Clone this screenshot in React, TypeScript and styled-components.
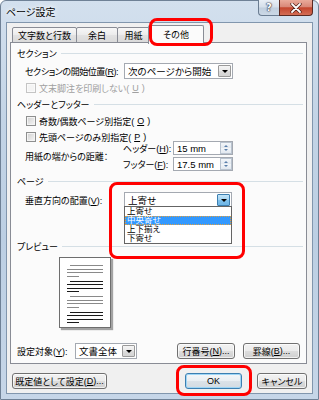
import React from 'react';
import styled, { createGlobalStyle } from 'styled-components';

const GlobalStyle = createGlobalStyle`
  * { box-sizing: border-box; }
  html, body { margin: 0; padding: 0; background: #fff; }
  body {
    font-family: 'Liberation Sans', 'Noto Sans CJK JP', sans-serif;
    font-size: 9px;
    color: #000;
    font-feature-settings: 'palt';
  }
`;

const Stage = styled.div`
  position: relative;
  width: 319px;
  height: 400px;
  overflow: hidden;
`;

const Window = styled.div`
  width: 319px;
  height: 400px;
  display: flex;
  flex-direction: column;
  padding: 0 5px 5px 5px;
  border: 1px solid #6f8196;
  border-radius: 6px 6px 0 0;
  background: linear-gradient(180deg, #d3e0ee 0%, #c3d4e6 30%, #bccfe3 60%, #c6d6e8 100%);
`;

const TitleBar = styled.div`
  height: 21px;
  display: flex;
  justify-content: space-between;
  align-items: flex-start;
`;

const Title = styled.div`
  font-size: 10px;
  padding: 3px 0 0 0;
  color: #000;
  text-shadow: 0 0 4px #fff, 0 0 6px #fff;
`;

const Caption = styled.div`
  display: flex;
  margin-top: -1px;
`;

const HelpButton = styled.div`
  width: 21px;
  height: 16px;
  border: 1px solid #6b7d92;
  border-top: none;
  border-right: none;
  border-radius: 0 0 0 4px;
  background: linear-gradient(180deg, #e9eff6 0%, #d5dfea 48%, #c1cfde 52%, #cbd8e6 100%);
  display: flex;
  align-items: center;
  justify-content: center;
  font-family: 'DejaVu Sans', sans-serif;
  font-weight: bold;
  font-size: 10px;
  color: #fff;
  text-shadow: 0 0 1px #334, 0 0 1px #334, 0 0 2px #445;
`;

const CloseButton = styled.div`
  width: 34px;
  height: 16px;
  border: 1px solid #5b2a22;
  border-top: none;
  border-radius: 0 0 4px 0;
  background: linear-gradient(180deg, #eaab9b 0%, #d98878 45%, #c4462e 52%, #d36d55 100%);
  display: flex;
  align-items: center;
  justify-content: center;
`;

const Client = styled.div`
  flex: 1;
  display: flex;
  flex-direction: column;
  border: 1px solid #8196ad;
  background: #f0f0f0;
`;

const TabRow = styled.div`
  height: 20px;
  display: flex;
  align-items: flex-end;
  padding-left: 5px;
  position: relative;
  z-index: 1;
`;

const Tab = styled.div<{ $w: number; $active?: boolean }>`
  width: ${(p) => p.$w}px;
  height: ${(p) => (p.$active ? 19 : 16)}px;
  margin: ${(p) => (p.$active ? '0 -2px -1px -2px' : '0 0 0 -1px')};
  border: 1px solid #898c95;
  border-bottom: ${(p) => (p.$active ? 'none' : '1px solid #898c95')};
  border-radius: 2px 2px 0 0;
  background: ${(p) =>
    p.$active ? '#fbfbfb' : 'linear-gradient(180deg, #f7f7f7 0%, #ececec 50%, #e2e2e2 51%, #dadada 100%)'};
  display: flex;
  align-items: center;
  justify-content: center;
  position: relative;
  z-index: ${(p) => (p.$active ? 2 : 1)};
  padding-bottom: ${(p) => (p.$active ? 2 : 0)}px;
  &:first-child { margin-left: 0; }
`;

const Panel = styled.div`
  width: 297px;
  height: 322px;
  margin: -1px 0 0 3px;
  border: 1px solid #898c95;
  background: #fbfbfb;
  display: flex;
  flex-direction: column;
  padding-left: 6px;
`;

const GroupHeader = styled.div<{ $mt: number }>`
  height: 14px;
  margin-top: ${(p) => p.$mt}px;
  display: flex;
  align-items: center;
  gap: 4px;
  padding-right: 3px;
  &::after {
    content: '';
    flex: 1;
    height: 1px;
    background: #d5dfe5;
  }
`;

const Row = styled.div<{ $mt: number; $h?: number; $pl?: number }>`
  display: flex;
  align-items: center;
  margin-top: ${(p) => p.$mt}px;
  height: ${(p) => p.$h ?? 16}px;
  padding-left: ${(p) => p.$pl ?? 0}px;
`;

const Label = styled.div<{ $w: number; $tight?: boolean }>`
  width: ${(p) => p.$w}px;
  white-space: nowrap;
  letter-spacing: ${(p) => (p.$tight ? '-0.45px' : 'normal')};
`;

const Combo = styled.div<{ $w: number }>`
  position: relative;
  width: ${(p) => p.$w}px;
  height: 16px;
  border: 1px solid #a4a9b1;
  background: #fff;
  display: flex;
  align-items: center;
  padding-left: 3px;
`;

const ComboText = styled.span`
  flex: 1;
  white-space: nowrap;
  font-size: 9.5px;
`;

const DropButton = styled.div<{ $hot?: boolean }>`
  width: 13px;
  height: 12px;
  margin-right: 1px;
  border: 1px solid ${(p) => (p.$hot ? '#3c7fb1' : '#9a9a9a')};
  border-radius: 1px;
  background: ${(p) =>
    p.$hot
      ? 'linear-gradient(180deg, #c2e4f8 0%, #a3d4f3 50%, #7dc0ec 51%, #6fb6e6 100%)'
      : 'linear-gradient(180deg, #f5f5f5 0%, #e8e8e8 50%, #dcdcdc 51%, #d4d4d4 100%)'};
  display: flex;
  align-items: center;
  justify-content: center;
  &::after {
    content: '';
    border-left: 3px solid transparent;
    border-right: 3px solid transparent;
    border-top: 3px solid #000;
  }
`;

const DropList = styled.div`
  position: absolute;
  top: calc(100% - 1px);
  left: -1px;
  right: -1px;
  border: 1px solid #646464;
  background: #fff;
  padding: 0;
  z-index: 5;
`;

const DropItem = styled.div<{ $sel?: boolean }>`
  height: 9px;
  line-height: 9px;
  font-size: 8.5px;
  padding-left: 2px;
  overflow: hidden;
  background: ${(p) => (p.$sel ? '#3399ff' : 'transparent')};
  color: ${(p) => (p.$sel ? '#fff' : '#000')};
  outline: ${(p) => (p.$sel ? '1px dotted #e0a040' : 'none')};
  outline-offset: -1px;
  white-space: nowrap;
`;

const CheckRow = styled.div<{ $mt: number; $disabled?: boolean }>`
  display: flex;
  align-items: center;
  gap: 3px;
  height: 14px;
  margin-top: ${(p) => p.$mt}px;
  padding-left: 9px;
  color: ${(p) => (p.$disabled ? '#a0a0a0' : '#000')};
`;

const Box = styled.span<{ $disabled?: boolean }>`
  width: 10px;
  height: 10px;
  border: 1px solid ${(p) => (p.$disabled ? '#c4c4c4' : '#8e8f8f')};
  background: ${(p) =>
    p.$disabled ? '#f4f4f4' : 'linear-gradient(135deg, #cfcfcf 0%, #e7e7e7 60%, #f7f7f7 100%)'};
  box-shadow: inset 0 0 0 1px ${(p) => (p.$disabled ? '#fafafa' : '#f4f4f4')};
`;

const DistanceBlock = styled.div`
  display: flex;
  align-items: center;
  margin-top: -3px;
  height: 30px;
  padding-left: 8px;
`;

const SpinColumn = styled.div`
  display: flex;
  flex-direction: column;
  gap: 2px;
`;

const SpinRow = styled.div`
  display: flex;
  align-items: center;
  height: 14px;
`;

const SpinBox = styled.div`
  width: 60px;
  height: 14px;
  border: 1px solid #a4a9b1;
  background: #fff;
  display: flex;
  align-items: center;
  padding-left: 3px;
`;

const SpinText = styled.span`
  flex: 1;
  font-size: 9.5px;
`;

const SpinButtons = styled.div`
  width: 12px;
  height: 12px;
  border: 1px solid #b9c3cf;
  background: linear-gradient(180deg, #f3f6f9 0%, #e2e8ef 50%, #f3f6f9 51%, #e2e8ef 100%);
  display: flex;
  flex-direction: column;
  align-items: center;
  justify-content: space-around;
  padding: 1px 0;
`;

const Arrow = styled.span<{ $up?: boolean }>`
  border-left: 2px solid transparent;
  border-right: 2px solid transparent;
  ${(p) => (p.$up ? 'border-bottom: 2px solid #5a7faa;' : 'border-top: 2px solid #5a7faa;')}
`;

const Page = styled.div`
  width: 52px;
  height: 71px;
  margin: 4px 0 0 42px;
  border: 1px solid #6e6e6e;
  background: #fff;
  box-shadow: 2px 2px 1px rgba(0, 0, 0, 0.35);
  padding: 7px 7px 0 7px;
  display: flex;
  flex-direction: column;
  gap: 4px;
`;

const Para = styled.div`
  display: flex;
  flex-direction: column;
  gap: 2.5px;
`;

const TextLine = styled.div<{ $kind: 'first' | 'full' | 'short'; $grey?: boolean }>`
  height: 1px;
  background: ${(p) => (p.$grey ? '#8a8a8a' : '#1a1a1a')};
  margin-left: ${(p) => (p.$kind === 'first' ? 3 : 0)}px;
  width: ${(p) => (p.$kind === 'short' ? '12px' : 'auto')};
`;

const BottomRow = styled.div`
  margin-top: auto;
  margin-bottom: 4px;
  height: 16px;
  display: flex;
  align-items: center;
`;

const Button = styled.div<{ $w: number; $default?: boolean; $ml?: number }>`
  width: ${(p) => p.$w}px;
  height: 16px;
  margin-left: ${(p) => p.$ml ?? 0}px;
  border: 1px solid ${(p) => (p.$default ? '#3c7fb1' : '#707070')};
  border-radius: 3px;
  background: ${(p) =>
    p.$default
      ? 'linear-gradient(180deg, #f4f7f9 0%, #e9eef2 50%, #dbe2e8 51%, #d3dbe2 100%)'
      : 'linear-gradient(180deg, #f2f2f2 0%, #ebebeb 50%, #dddddd 51%, #cfcfcf 100%)'};
  box-shadow: inset 0 0 0 1px ${(p) => (p.$default ? '#9fd6f6' : 'rgba(255,255,255,0.7)')};
  display: flex;
  align-items: center;
  justify-content: center;
  white-space: nowrap;
  font-size: 9px;
`;

const DialogButtons = styled.div`
  height: 16px;
  margin-top: 9px;
  display: flex;
  align-items: center;
  padding: 0 5px;
`;

const Spacer = styled.div`
  flex: 1;
`;

const Mark = styled.div<{ $x: number; $y: number; $w: number; $h: number }>`
  position: absolute;
  left: ${(p) => p.$x}px;
  top: ${(p) => p.$y}px;
  width: ${(p) => p.$w}px;
  height: ${(p) => p.$h}px;
  border: 3px solid #ff0000;
  border-radius: 8px;
  pointer-events: none;
  z-index: 10;
`;

const U = styled.span`
  text-decoration: underline;
`;

const paragraphs = [true, false, true, false];

export default function App() {
  return (
    <Stage>
      <GlobalStyle />
      <Window>
        <TitleBar>
          <Title>ページ設定</Title>
          <Caption>
            <HelpButton>?</HelpButton>
            <CloseButton>
              <svg width="12" height="10" viewBox="0 0 12 10">
                <path d="M2 1 L10 9 M10 1 L2 9" stroke="#4a1a12" strokeWidth="3.2" strokeLinecap="round" />
                <path d="M2 1 L10 9 M10 1 L2 9" stroke="#ffffff" strokeWidth="1.8" strokeLinecap="round" />
              </svg>
            </CloseButton>
          </Caption>
        </TitleBar>
        <Client>
          <TabRow>
            <Tab $w={65}>文字数と行数</Tab>
            <Tab $w={42}>余白</Tab>
            <Tab $w={33}>用紙</Tab>
            <Tab $w={56} $active>その他</Tab>
          </TabRow>
          <Panel>
            <GroupHeader $mt={3}>セクション</GroupHeader>
            <Row $mt={3} $pl={8}>
              <Label $w={99} $tight>
                セクションの開始位置(<U>R</U>):
              </Label>
              <Combo $w={109}>
                <ComboText>次のページから開始</ComboText>
                <DropButton />
              </Combo>
            </Row>
            <CheckRow $mt={2} $disabled>
              <Box $disabled />
              文末脚注を印刷しない(<U>U</U>)
            </CheckRow>
            <GroupHeader $mt={2}>ヘッダーとフッター</GroupHeader>
            <CheckRow $mt={3}>
              <Box />
              奇数/偶数ページ別指定(<U>O</U>)
            </CheckRow>
            <CheckRow $mt={2}>
              <Box />
              先頭ページのみ別指定(<U>P</U>)
            </CheckRow>
            <DistanceBlock>
              <Label $w={98}>用紙の端からの距離：</Label>
              <SpinColumn>
                <SpinRow>
                  <Label $w={50}>
                    ヘッダー(<U>H</U>):
                  </Label>
                  <SpinBox>
                    <SpinText>15 mm</SpinText>
                    <SpinButtons>
                      <Arrow $up />
                      <Arrow />
                    </SpinButtons>
                  </SpinBox>
                </SpinRow>
                <SpinRow>
                  <Label $w={50}>
                    フッター(<U>F</U>):
                  </Label>
                  <SpinBox>
                    <SpinText>17.5 mm</SpinText>
                    <SpinButtons>
                      <Arrow $up />
                      <Arrow />
                    </SpinButtons>
                  </SpinBox>
                </SpinRow>
              </SpinColumn>
            </DistanceBlock>
            <GroupHeader $mt={3}>ページ</GroupHeader>
            <Row $mt={4} $pl={8}>
              <Label $w={99}>
                垂直方向の配置(<U>V</U>):
              </Label>
              <Combo $w={108}>
                <ComboText>上寄せ</ComboText>
                <DropButton $hot />
                <DropList>
                  <DropItem>上寄せ</DropItem>
                  <DropItem $sel>中央寄せ</DropItem>
                  <DropItem>上下揃え</DropItem>
                  <DropItem>下寄せ</DropItem>
                </DropList>
              </Combo>
            </Row>
            <GroupHeader $mt={31}>プレビュー</GroupHeader>
            <Page>
              {paragraphs.map((grey, i) => (
                <Para key={i}>
                  <TextLine $kind="first" $grey={grey} />
                  <TextLine $kind="full" $grey={grey} />
                  <TextLine $kind="full" $grey={grey} />
                  <TextLine $kind="short" $grey={grey} />
                </Para>
              ))}
            </Page>
            <BottomRow>
              <Label $w={58}>
                設定対象(<U>Y</U>):
              </Label>
              <Combo $w={62}>
                <ComboText>文書全体</ComboText>
                <DropButton />
              </Combo>
              <Button $w={58} $ml={40}>
                行番号(<U>N</U>)...
              </Button>
              <Button $w={57} $ml={8}>
                罫線(<U>B</U>)...
              </Button>
            </BottomRow>
          </Panel>
          <DialogButtons>
            <Button $w={95}>
              既定値として設定(<U>D</U>)...
            </Button>
            <Spacer />
            <Button $w={57} $default>
              OK
            </Button>
            <Button $w={50} $ml={15}>
              キャンセル
            </Button>
          </DialogButtons>
        </Client>
      </Window>
      <Mark $x={149} $y={18} $w={64} $h={28} />
      <Mark $x={109} $y={182} $w={136} $h={77} />
      <Mark $x={176} $y={365} $w={76} $h={31} />
    </Stage>
  );
}
